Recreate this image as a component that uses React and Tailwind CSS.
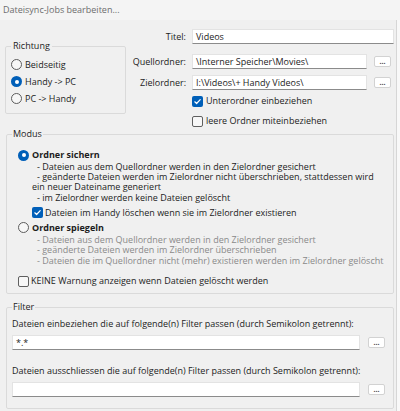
import React from 'react';

const Radio = ({ checked }) => (
    checked ? (
        <span className="w-[11px] h-[11px] rounded-full bg-[#005fb8] flex items-center justify-center shrink-0">
            <span className="w-[4px] h-[4px] rounded-full bg-white" />
        </span>
    ) : (
        <span className="w-[11px] h-[11px] rounded-full border border-[#5c5c5c] bg-[#f7f7f7] shrink-0" />
    )
);

const Checkbox = ({ checked }) => (
    checked ? (
        <span className="w-[11px] h-[11px] rounded-[2px] bg-[#005fb8] flex items-center justify-center shrink-0">
            <svg width="9" height="9" viewBox="0 0 9 9">
                <path d="M1.8 4.8 L3.6 6.5 L7.2 2.6" fill="none" stroke="white" strokeWidth="1.2" strokeLinecap="round" strokeLinejoin="round" />
            </svg>
        </span>
    ) : (
        <span className="w-[11px] h-[11px] rounded-[2px] border border-[#5f5f5f] bg-[#f7f7f7] shrink-0" />
    )
);

const DotsButton = () => (
    <button className="w-[17px] h-[11px] bg-white border border-[#d2d2d2] rounded-[2px] flex items-end justify-center text-[7px] leading-[8px] font-bold text-[#333]">
        ...
    </button>
);

const TextBox = ({ value, width }) => (
    <div className={`${width} h-[15px] bg-white border border-[#e3e3e3] border-b-[#8b8b8b] flex items-center px-[3px] whitespace-nowrap overflow-hidden`}>
        {value}
    </div>
);

const FormRow = ({ label, children, className }) => (
    <div className={`flex items-center ${className}`}>
        <div className="w-[61px] text-right pr-[1px]">{label}</div>
        <div className="ml-[5px] flex items-center">{children}</div>
    </div>
);

export default function App() {
    return (
        <div className="w-[400px] h-[411px] bg-[#f0f0f0] text-[9px] leading-[12px] text-[#1c1c1c] font-['Open_Sans','Liberation_Sans',sans-serif] overflow-hidden flex flex-col">
            <div className="h-[20px] shrink-0 bg-[#f4f4f4] px-[3px] flex items-center text-[#6d6d6d]">
                Dateisync-Jobs bearbeiten...
            </div>

            <div className="flex flex-1 min-h-0">
                <div className="w-[396px] flex flex-col">
                    {/* Richtung + Ordner */}
                    <div className="flex items-start">
                        <fieldset className="ml-[5px] mt-[20px] w-[121px] h-[74px] border border-[#dadada] rounded-[2px]">
                            <legend className="ml-[5px] px-[2px]">Richtung</legend>
                            <div className="flex flex-col pl-[5px] pt-[4px]">
                                <label className="h-[17px] flex items-center gap-[3px]"><Radio />Beidseitig</label>
                                <label className="h-[17px] flex items-center gap-[3px]"><Radio checked />Handy -&gt; PC</label>
                                <label className="h-[17px] flex items-center gap-[3px]"><Radio />PC -&gt; Handy</label>
                            </div>
                        </fieldset>

                        <div className="flex flex-col">
                            <FormRow label="Titel:" className="mt-[9px]">
                                <TextBox value="Videos" width="w-[202px]" />
                            </FormRow>
                            <FormRow label="Quellordner:" className="mt-[10px]">
                                <TextBox value="\Interner Speicher\Movies\" width="w-[175px]" />
                                <span className="ml-[7px]"><DotsButton /></span>
                            </FormRow>
                            <FormRow label="Zielordner:" className="mt-[6px]">
                                <TextBox value="I:\Videos\+ Handy Videos\" width="w-[175px]" />
                                <span className="ml-[7px]"><DotsButton /></span>
                            </FormRow>
                            <label className="mt-[5px] h-[12px] pl-[66px] flex items-center gap-[3px]">
                                <Checkbox checked />Unterordner einbeziehen
                            </label>
                            <label className="mt-[8px] h-[12px] pl-[66px] flex items-center gap-[3px]">
                                <Checkbox />leere Ordner miteinbeziehen
                            </label>
                        </div>
                    </div>

                    {/* Modus */}
                    <fieldset className="ml-[6px] mt-[1px] w-[388px] h-[166px] border border-[#dadada] rounded-[2px]">
                        <legend className="ml-[5px] px-[1px]">Modus</legend>
                        <div className="pl-[11px] pt-[9px] flex flex-col">
                            <label className="h-[12px] flex items-center gap-[3px] font-bold"><Radio checked />Ordner sichern</label>
                            <div className="pl-[14px] leading-[10.2px] mt-[1px] whitespace-nowrap">
                                <div className="pl-[5px]">- Dateien aus dem Quellordner werden in den Zielordner gesichert</div>
                                <div className="pl-[5px]">- geänderte Dateien werden im Zielordner nicht überschrieben, stattdessen wird</div>
                                <div>ein neuer Dateiname generiert</div>
                                <div className="pl-[5px]">- im Zielordner werden keine Dateien gelöscht</div>
                            </div>
                            <label className="mt-[4px] h-[12px] pl-[14px] flex items-center gap-[2px]">
                                <Checkbox checked />Dateien im Handy löschen wenn sie im Zielordner existieren
                            </label>
                            <label className="mt-[3px] h-[12px] flex items-center gap-[3px] font-bold"><Radio />Ordner spiegeln</label>
                            <div className="pl-[14px] leading-[10.5px] mt-[1px] whitespace-nowrap text-[#8a8a8a]">
                                <div className="pl-[5px]">- Dateien aus dem Quellordner werden in den Zielordner gesichert</div>
                                <div className="pl-[5px]">- geänderte Dateien werden im Zielordner überschrieben</div>
                                <div className="pl-[5px]">- Dateien die im Quellordner nicht (mehr) existieren werden im Zielordner gelöscht</div>
                            </div>
                            <label className="mt-[9px] h-[12px] flex items-center gap-[2px]">
                                <Checkbox />KEINE Warnung anzeigen wenn Dateien gelöscht werden
                            </label>
                        </div>
                    </fieldset>

                    {/* Filter */}
                    <fieldset className="ml-[6px] mt-[7px] w-[388px] h-[108px] border border-[#dadada] rounded-[2px]">
                        <legend className="ml-[5px] px-[1px]">Filter</legend>
                        <div className="pl-[5px] pt-[5px] flex flex-col">
                            <div className="h-[12px]">Dateien einbeziehen die auf folgende(n) Filter passen (durch Semikolon getrennt):</div>
                            <div className="mt-[5px] flex items-center">
                                <TextBox value="*.*" width="w-[348px]" />
                                <span className="ml-[8px]"><DotsButton /></span>
                            </div>
                            <div className="mt-[15px] h-[12px]">Dateien ausschliessen die auf folgende(n) Filter passen (durch Semikolon getrennt):</div>
                            <div className="mt-[5px] flex items-center">
                                <TextBox value="" width="w-[348px]" />
                                <span className="ml-[8px]"><DotsButton /></span>
                            </div>
                        </div>
                    </fieldset>
                </div>
                <div className="w-px bg-[#d6d6d6]" />
                <div className="flex-1 bg-[#f8f8f8]" />
            </div>
        </div>
    );
}
